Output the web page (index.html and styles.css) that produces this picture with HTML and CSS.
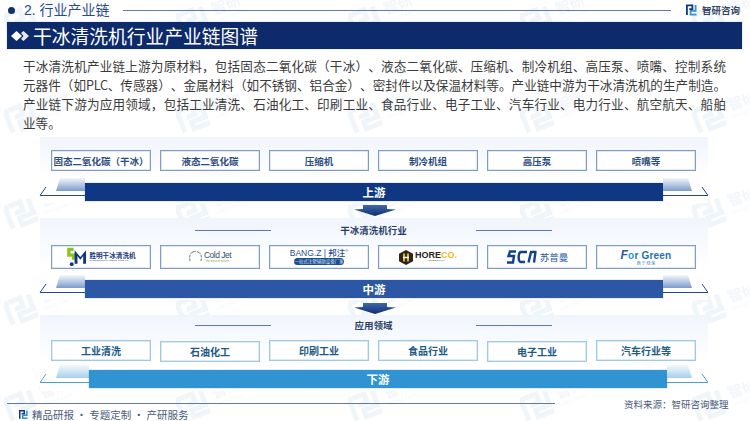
FILE: index.html
```html
<!DOCTYPE html>
<html lang="zh-CN">
<head>
<meta charset="utf-8">
<title>干冰清洗机行业产业链图谱</title>
<link rel="stylesheet" href="styles.css">
</head>
<body>
<div class="page">
  <svg class="watermark" width="750" height="421" aria-hidden="true">
    <defs>
      <pattern id="wm" width="172" height="96" patternUnits="userSpaceOnUse" x="4" y="-2">
        <g transform="rotate(-22 20 20) translate(0 6)">
          <path class="wm-stroke" d="M3 27V5H19V14H10M28 5V20H13V27H30"/>
          <text class="wm-text" x="38" y="18">智研</text>
          <text class="wm-small" x="38" y="26">INTELLIGENCE</text>
        </g>
      </pattern>
    </defs>
    <rect width="750" height="421" fill="url(#wm)"/>
  </svg>

  <header class="top">
    <span class="dot"></span>
    <span class="crumb">2. 行业产业链</span>
    <span class="top-line"></span>
    <svg class="brand-icon" viewBox="0 0 12 12" width="11" height="12"><path class="ic-navy" d="M1 11.5V1H7V5H3.5"/><path class="ic-blue" d="M10.5 .5V7H5V11H11.5"/></svg>
    <span class="brand">智研咨询</span>
  </header>

  <div class="title-bar">
    <svg class="diamonds" viewBox="0 0 18 10" width="18" height="10"><path d="M5.500 0L11 5L5.500 10L0 5Z"/><path class="d2" d="M12.500 0L18 5L12.500 10L10 8L12.500 5L10 2Z"/></svg>
    <h1>干冰清洗机行业产业链图谱</h1>
  </div>

  <p class="intro">干冰清洗机产业链上游为原材料，包括固态二氧化碳（干冰）、液态二氧化碳、压缩机、制冷机组、高压泵、喷嘴、控制系统元器件（如<span class="latin">PLC</span>、传感器）、金属材料（如不锈钢、铝合金）、密封件以及保温材料等。产业链中游为干冰清洗机的生产制造。产业链下游为应用领域，包括工业清洗、石油化工、印刷工业、食品行业、电子工业、汽车行业、电力行业、航空航天、船舶业等。</p>

  <section class="band band-up">
    <div class="cells">
      <div class="cell">固态二氧化碳（干冰）</div>
      <div class="cell">液态二氧化碳</div>
      <div class="cell">压缩机</div>
      <div class="cell">制冷机组</div>
      <div class="cell">高压泵</div>
      <div class="cell">喷嘴等</div>
    </div>
    <div class="bar-row">
      <svg class="wedge" width="45" height="24" viewBox="0 0 45 24"><defs><linearGradient id="g1" x1="0" y1="0" x2="0" y2="1"><stop offset="0" stop-color="#f4f7fc"/><stop offset="1" stop-color="#7d9ccb"/></linearGradient></defs><path d="M20 0H45V13H16Z" fill="url(#g1)"/><path class="w-line" d="M6 9L0 17.500H45"/></svg>
      <div class="bar bar-navy">上游</div>
      <svg class="wedge" width="45" height="24" viewBox="0 0 45 24"><path d="M0 0H25L29 13H0Z" fill="url(#g1)"/><path class="w-line" d="M39 9L45 17.500H0"/></svg>
    </div>
  </section>
  <svg class="arrow" width="42" height="11" viewBox="0 0 42 11"><defs><linearGradient id="ga" x1="0" y1="0" x2="0" y2="1"><stop offset="0" stop-color="#3f69a8"/><stop offset="1" stop-color="#0f2f72"/></linearGradient></defs><path d="M9 0H33V4L42 4.500L21 11L0 4.500L9 4Z" fill="url(#ga)"/></svg>

  <section class="band band-mid">
    <div class="band-title"><span class="rule"></span><span class="band-name">干冰清洗机行业</span><span class="rule"></span></div>
    <div class="cells">
      <div class="cell logo-cell">
        <svg width="21" height="20" viewBox="0 0 22 20"><path d="M8 2H3V8H8V13" fill="none" stroke="#8cc21f" stroke-width="3.500"/><circle cx="6" cy="17.500" r="2" fill="#10357f"/><path d="M9 17V3L15 10L21 3V17H18V9L15 13L12 9V17Z" fill="#10357f"/></svg>
        <span class="sm"><b>胜明干冰清洗机</b><small>SHENGMING GANBING QINGXIJI</small></span>
      </div>
      <div class="cell logo-cell">
        <svg width="13" height="12" viewBox="0 0 13 12"><path d="M4 1C1 2 0 5 1 10M9 1C12 2 13 5 12 10M4 1C6 0 7 0 9 1" fill="none" stroke="#3b566f" stroke-width=".8" stroke-dasharray="3 1"/></svg>
        <span class="cold"><b>Cold Jet</b><small>the best of nature</small></span>
      </div>
      <div class="cell logo-cell">
        <span class="bang"><b>BANG.Z | 邦注<sup>®</sup></b><small>一站式注塑辅助设备厂家</small></span>
      </div>
      <div class="cell logo-cell">
        <svg width="14" height="15" viewBox="0 0 14 15"><path d="M7 0L14 3.750V11.250L7 15L0 11.250V3.750Z" fill="#2a2523"/><path d="M5 3.500V11.500M9 3.500V11.500" stroke="#f3c11b" stroke-width="1.800"/><path d="M4 7.500H10" stroke="#fff" stroke-width="1.500"/></svg>
        <span class="hore"><b>HORE<i>CO.</i></b><small>HORECO 1999</small></span>
      </div>
      <div class="cell logo-cell">
        <svg width="32" height="14" viewBox="0 0 30 14"><path d="M9 1.500H3L1.500 6H7L6 12.500H0M20 2H14C11 2 11 12 13.500 12H18M24 2L21.500 12.500M28.500 2L27 12.500M23 2H29.500" fill="none" stroke="#12408c" stroke-width="2.400"/></svg>
        <span class="spm">苏普曼</span>
      </div>
      <div class="cell logo-cell">
        <span class="green"><b><i>F</i><u>o</u>r Green</b><small>西 宁 绿 保</small></span>
      </div>
    </div>
    <div class="bar-row">
      <svg class="wedge" width="45" height="24" viewBox="0 0 45 24"><path d="M20 0H45V13H16Z" fill="url(#g1)"/><path class="w-line" d="M6 9L0 17.500H45"/></svg>
      <div class="bar bar-mid">中游</div>
      <svg class="wedge" width="45" height="24" viewBox="0 0 45 24"><path d="M0 0H25L29 13H0Z" fill="url(#g1)"/><path class="w-line" d="M39 9L45 17.500H0"/></svg>
    </div>
  </section>
  <svg class="arrow" width="42" height="11" viewBox="0 0 42 11"><path d="M9 0H33V4L42 4.500L21 11L0 4.500L9 4Z" fill="url(#ga)"/></svg>

  <section class="band band-down">
    <div class="band-title"><span class="rule"></span><span class="band-name">应用领域</span><span class="rule"></span></div>
    <div class="cells cells-light">
      <div class="cell">工业清洗</div>
      <div class="cell cell-low">石油化工</div>
      <div class="cell">印刷工业</div>
      <div class="cell">食品行业</div>
      <div class="cell cell-low">电子工业</div>
      <div class="cell">汽车行业等</div>
    </div>
    <div class="bar-row">
      <svg class="wedge" width="49" height="24" viewBox="0 0 49 24"><defs><linearGradient id="g2" x1="0" y1="0" x2="0" y2="1"><stop offset="0" stop-color="#f4f9fd"/><stop offset="1" stop-color="#a6d0ea"/></linearGradient></defs><path d="M20 0H49V13H16Z" fill="url(#g2)"/><path class="w-line w-light" d="M6 9L0 17.500H49"/></svg>
      <div class="bar bar-down">下游</div>
      <svg class="wedge" width="41" height="24" viewBox="0 0 41 24"><path d="M0 0H21L25 13H0Z" fill="url(#g2)"/><path class="w-line w-light" d="M35 9L41 17.500H0"/></svg>
    </div>
  </section>

  <footer class="foot">
    <div class="foot-left">
      <div class="foot-line"></div>
      <div class="foot-note">
        <svg viewBox="0 0 12 12" width="9" height="9"><path class="ic-navy" d="M1 11.500V1H7V5H3.500"/><path class="ic-blue" d="M10.500 .5V7H5V11H11.500"/></svg>
        <span>精品研报 · 专题定制 · 产研服务</span>
      </div>
    </div>
    <div class="source">资料来源：智研咨询整理</div>
  </footer>
</div>
</body>
</html>
```

FILE: styles.css
```css
* { box-sizing: border-box; }
html, body { margin: 0; padding: 0; background: #fff; }
body { font-family: "Noto Sans CJK SC", "Noto Sans", sans-serif; text-spacing-trim: space-all; }
.page { position: relative; width: 750px; height: 421px; overflow: hidden; }
.page > *:not(.watermark) { position: relative; }
.watermark { position: absolute; left: 0; top: 0; }
.wm-stroke { fill: none; stroke: #f0f5fa; stroke-width: 5; }
.wm-text { font-size: 15px; font-weight: 700; fill: #f3f6fa; }
.wm-small { font-size: 4px; fill: #f1f4f9; font-family: "Liberation Sans", sans-serif; }

.top { display: flex; align-items: center; height: 20px; padding: 0 10px 0 8px; }
.dot { width: 7px; height: 7px; border-radius: 50%; background: #14306f; }
.crumb { margin-left: 9px; width: 99px; font-size: 14px; line-height: 20px; color: #2a4a8a; font-family: "Liberation Sans", "Noto Sans CJK SC", sans-serif; white-space: nowrap; }
.top-line { width: 549px; height: 1px; background: #6478ad; }
.brand-icon { margin-left: 15px; }
.brand { margin-left: 5px; font-size: 9.500px; font-weight: 700; color: #36465f; white-space: nowrap; }
.ic-navy, .ic-blue { fill: none; stroke-width: 2; }
.ic-navy { stroke: #17377f; }
.ic-blue { stroke: #2f95d2; }

.title-bar { display: flex; align-items: center; height: 27px; margin: 2px 8px 0 7px; padding-left: 4px; background: #0d2a6b; box-shadow: 0 0 1px #8fa0c8; }
.diamonds { fill: #fff; flex: none; }
.diamonds .d2 { fill: #e6e9f1; }
.title-bar h1 { margin: 0 0 0 4px; font-size: 18.750px; line-height: 27px; font-weight: 400; color: #fff; white-space: nowrap; }

.intro { width: 703px; margin: 7px 0 0 23px; font-size: 12.600px; line-height: 19px; color: #3b3b3b; text-align: justify; }
.latin { letter-spacing: -.3px; }

.band { width: 668px; margin-left: 40px; padding: 0 12px 0 11px; background: linear-gradient(180deg, #f0f5fc 0, #ffffff 60%); }
.band-up { margin-top: 5px; height: 66px; padding-top: 13px; }
.band-mid { height: 82px; padding-top: 5px; }
.band-down { height: 76px; }

.cells { display: grid; grid-template-columns: repeat(6, 100px); column-gap: 9px; }
.cell { display: flex; align-items: center; justify-content: center; height: 21px; background: #fff; border: 1px solid #7e9bc9; box-shadow: inset 0 0 0 .5px #c5d3e8; font-size: 9.500px; font-weight: 700; color: #2b4c80; white-space: nowrap; }
.band-mid .cell { height: 24px; }
.cells-light .cell { border-color: #9ccbe8; color: #225a86; font-size: 10px; }
.cell-low { transform: translateY(1px); }

.band-title { display: flex; align-items: center; justify-content: center; height: 14px; }
.band-down .band-title { height: 20px; }
.band-name { width: 205px; text-align: center; font-size: 9.500px; font-weight: 700; color: #2a3f68; }
.rule { width: 76px; height: 1px; background: #5e7bb0; }
.band-mid .cells { margin-top: 8px; }
.band-down .cells { margin-top: 5px; }

.bar-row { display: flex; align-items: flex-start; margin: 7px -12px 0 -11px; }
.band-mid .bar-row { margin-top: 6px; }
.band-down .bar-row { margin-top: 4px; }
.wedge { flex: none; }
.w-line { fill: none; stroke: #204a92; stroke-width: 1; }
.w-light { stroke: #4a9fd4; }
.bar { flex: none; width: 578px; height: 18px; margin-top: 5px; line-height: 18px; text-align: center; font-size: 11.500px; font-weight: 700; color: #fff; box-shadow: 0 0 1px #6f8cc0; }
.bar-navy { background: #0f3783; }
.bar-mid { background: #2c57a4; }
.bar-down { background: #2f94d1; }

.arrow { display: block; margin: 2px 0 2px 354px; }
.band-mid + .arrow { margin-top: 3px; margin-bottom: 1px; }

.foot { display: flex; align-items: flex-start; height: 21px; margin-top: 12px; padding-left: 7px; }
.foot-left { width: 548px; }
.foot-line { height: 1px; background: #6478ad; }
.foot-note { display: flex; align-items: center; gap: 4px; height: 20px; padding-left: 12px; font-size: 10.500px; color: #4c5a7c; white-space: nowrap; }
.source { margin: -6px 0 0 69px; font-size: 9.500px; line-height: 14px; color: #4c5a7c; white-space: nowrap; }

/* logos */
.logo-cell { gap: 2px; font-weight: 400; }
.logo-cell small { display: block; white-space: nowrap; }
.sm { display: flex; flex-direction: column; line-height: 1; }
.sm b { font-size: 6.600px; color: #17357f; }
.sm small { font-size: 2.500px; color: #2d4a8c; margin-top: 1px; font-family: "Liberation Sans", sans-serif; }
.cold { display: flex; flex-direction: column; line-height: 1; font-family: "Liberation Sans", sans-serif; }
.cold b { font-size: 8.500px; font-weight: 400; color: #2f5171; letter-spacing: -.5px; }
.cold small { font-size: 3px; color: #8cab3a; text-align: center; }
.bang { display: flex; flex-direction: column; align-items: center; line-height: 1; }
.bang b { font-size: 8.500px; font-weight: 500; color: #27508f; font-family: "Liberation Sans", "Noto Sans CJK SC", sans-serif; }
.bang sup { font-size: 4px; line-height: 0; }
.bang small { width: 50px; height: 7px; margin-top: 1px; border-radius: 4px; background: #1c4a8d; color: #d6e6f5; font-size: 4.500px; line-height: 7px; text-align: center; }
.hore { display: flex; flex-direction: column; align-items: center; line-height: 1; font-family: "Liberation Sans", sans-serif; }
.hore b { font-size: 9px; font-weight: 700; color: #2a2523; }
.hore i { font-style: normal; color: #eabb1c; }
.hore small { font-size: 2.500px; color: #444; }
.spm { font-size: 9.500px; color: #2c5a9c; }
.green { display: flex; flex-direction: column; align-items: center; line-height: 1; font-family: "Liberation Sans", sans-serif; }
.green b { font-size: 10px; color: #1f6fb5; letter-spacing: .2px; }
.green b i { color: #2b55a8; font-size: 12px; }
.green b u { text-decoration: none; color: #1d9ad6; }
.green small { font-size: 4px; color: #3b7aa8; font-family: "Noto Sans CJK SC", sans-serif; }
```
